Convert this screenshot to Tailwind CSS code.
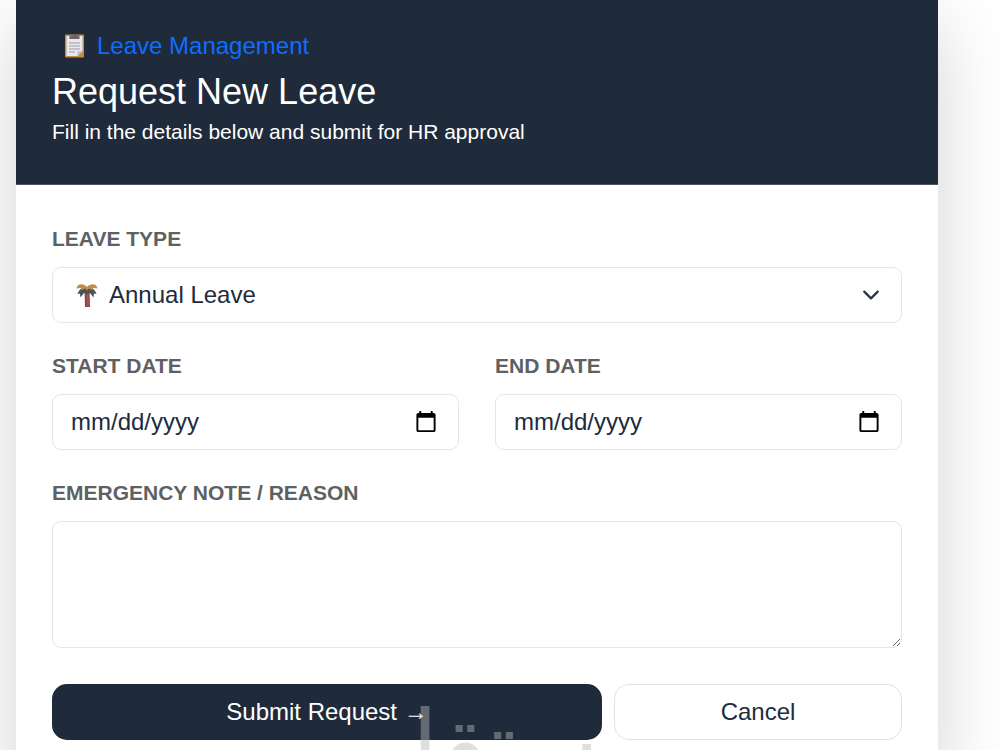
<!DOCTYPE html>
<html lang="en">
<head>
  <meta charset="UTF-8" />
  <meta name="viewport" content="width=device-width, initial-scale=1.0"/>
  <title>Request New Leave - Leave Management</title>
  <script src="https://cdn.jsdelivr.net/npm/@tailwindcss/browser@4"></script>
</head>
<body class="bg-white pl-4 pr-[62px] font-['Liberation_Sans',Arial,sans-serif] text-[#212b3d]">

  <main class="w-full bg-white shadow-[0_24px_72px_rgba(0,0,0,0.175)]">

    <header class="bg-[#1f2a3b] border-b border-[#4c5668] px-9 pt-7 pb-9 text-white">
      <a href="#" class="flex w-fit items-center gap-3 px-3 h-9 text-2xl text-[#0d6efd]">
        <svg class="w-[21px] h-6" viewBox="0 0 20 24" aria-hidden="true">
          <rect x="0.5" y="0.5" width="19" height="23" rx="1" fill="#c98b45"/>
          <path d="M2 2h16v15l-5 5H2z" fill="#e9e8ee"/>
          <path d="M18 17l-5 5v-4.500z" fill="#bfc0c8"/>
          <path d="M5 1.500h3a2 1.500 0 0 1 4 0h3V5H5z" fill="#6b6468"/>
          <path d="M4.500 9h11M4.500 12h11M4.500 15h11M4.500 18h6" stroke="#9b9ba3" stroke-width="1"/>
        </svg>
        Leave Management
      </a>
      <h1 class="mt-1.5 text-4xl leading-[43px]">Request New Leave</h1>
      <p class="mt-[3px] text-[21px] leading-8">Fill in the details below and submit for HR approval</p>
    </header>

    <form id="leaveForm" class="px-9 pt-[38px] pb-9 flex flex-col gap-[27px]">
      <div class="flex flex-col gap-3">
        <label for="leaveType" class="text-[21px] leading-8 font-bold text-[#5d6163]">LEAVE TYPE</label>
        <div class="relative">
          <select id="leaveType" class="block w-full h-14 pl-14 pr-14 text-2xl bg-white appearance-none border border-[#e5e6e9] rounded-[9px]">
            <option>Annual Leave</option>
          </select>
          <svg class="absolute left-6 top-4 w-[22px] h-6 pointer-events-none" viewBox="0 0 22 24" aria-hidden="true">
            <path d="M8.500 8h5l.5 16H9z" fill="#8c4347"/>
            <path d="M10.500 8h2l.3 16h-2z" fill="#a55553"/>
            <path d="M11 5C7 4 3 6 1.500 11l2.500-.5.5 4L8 10l3 1 3-1 3.500 4.500.5-4 2.500.5C19 6 15 4 11 5z" fill="#4b5354"/>
            <path d="M11 4C8 0 1 0 .5 5.500l4-.5L6 7l3-1.500 2 2 2-2L16 7l1.500-2 4 .5C21 0 14 0 11 4z" fill="#c38c4c"/>
          </svg>
          <svg class="absolute right-[22px] top-[19px] w-[18px] h-[18px] pointer-events-none" viewBox="0 0 16 16" fill="none" stroke="#2b3345" stroke-width="2" stroke-linecap="round" stroke-linejoin="round" aria-hidden="true">
            <path d="M2 5l6 6 6-6"/>
          </svg>
        </div>
      </div>

      <div class="grid grid-cols-2 gap-9">
        <div class="flex flex-col gap-3">
          <label for="startDate" class="text-[21px] leading-8 font-bold text-[#5d6163]">START DATE</label>
          <input type="date" id="startDate" class="w-full h-14 px-[18px] text-2xl bg-white border border-[#e5e6e9] rounded-[9px] [&::-webkit-datetime-edit-month-field]:p-0 [&::-webkit-datetime-edit-day-field]:p-0 [&::-webkit-datetime-edit-year-field]:p-0" />
        </div>
        <div class="flex flex-col gap-3">
          <label for="endDate" class="text-[21px] leading-8 font-bold text-[#5d6163]">END DATE</label>
          <input type="date" id="endDate" class="w-full h-14 px-[18px] text-2xl bg-white border border-[#e5e6e9] rounded-[9px] [&::-webkit-datetime-edit-month-field]:p-0 [&::-webkit-datetime-edit-day-field]:p-0 [&::-webkit-datetime-edit-year-field]:p-0" />
        </div>
      </div>

      <div class="flex flex-col gap-3">
        <label for="reason" class="text-[21px] leading-8 font-bold text-[#5d6163]">EMERGENCY NOTE / REASON</label>
        <textarea id="reason" class="block w-full h-[127px] px-[18px] py-2 text-2xl bg-white border border-[#e5e6e9] rounded-[9px]"></textarea>
      </div>

      <div class="mt-[9px] flex gap-3">
        <button type="submit" class="flex-1 h-14 bg-[#1f2a3b] text-white text-2xl rounded-[15px]">Submit Request →</button>
        <button type="button" class="w-[34%] max-w-72 h-14 bg-white text-2xl border border-[#e0e1e4] rounded-[15px]">Cancel</button>
      </div>
    </form>
  </main>

  <!-- watermark -->
  <div lang="ar" dir="rtl" class="fixed inset-x-0 bottom-0 h-14 pl-6 overflow-hidden pointer-events-none text-center font-['DejaVu_Sans',sans-serif] text-8xl leading-[104px] text-[#b9b9b9]/45">مستقل</div>

</body>
</html>
